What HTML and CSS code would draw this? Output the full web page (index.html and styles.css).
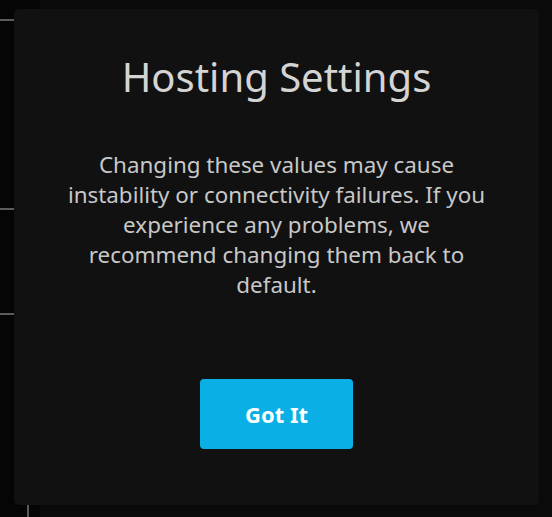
FILE: index.html
```html
<!DOCTYPE html>
<html>
<head>
<meta charset="utf-8">
<link rel="stylesheet" href="styles.css">
</head>
<body>
<div class="backdrop">
  <div class="side">
    <div class="sec sec-a"></div>
    <div class="sec sec-b"></div>
    <div class="sec sec-c"></div>
    <div class="sec-rest"><div class="vline"></div></div>
  </div>
</div>
<div class="dialog">
  <h1 class="title">Hosting Settings</h1>
  <p class="msg">Changing these values may cause instability or connectivity failures. If you experience any problems, we recommend changing them back to default.</p>
  <button class="btn">Got It</button>
</div>
</body>
</html>
```
FILE: styles.css
```css
html, body {
  margin: 0;
  padding: 0;
  width: 552px;
  height: 517px;
  overflow: hidden;
  background: #0a0a0a;
  font-family: "Noto Sans", "Open Sans", sans-serif;
}
.backdrop {
  display: flex;
  height: 517px;
}
.side {
  width: 40px;
  background: #050505;
  display: flex;
  flex-direction: column;
}
.sec {
  border-bottom: 2px solid #5c5c5c;
}
.sec-a { height: 19px; }
.sec-b { height: 187px; }
.sec-c { height: 103px; }
.sec-rest {
  flex: 1;
  display: flex;
  flex-direction: column;
  justify-content: flex-end;
  padding-left: 27px;
}
.vline {
  width: 2px;
  height: 14px;
  background: #5a5a5a;
}
.dialog {
  position: absolute;
  left: 14px;
  top: 9px;
  width: 525px;
  height: 496px;
  box-sizing: border-box;
  background: #111111;
  border-radius: 5px;
  padding-top: 41px;
  display: flex;
  flex-direction: column;
  align-items: center;
}
.title {
  margin: 0;
  font-size: 40px;
  font-weight: 400;
  line-height: 54px;
  color: #d4d4d4;
}
.msg {
  margin: 46px 0 0;
  width: 440px;
  text-align: center;
  font-size: 22.4px;
  line-height: 30px;
  color: #c8c8c8;
}
.btn {
  margin-top: 79px;
  width: 153px;
  height: 70px;
  border: none;
  border-radius: 4px;
  background: #0aafe6;
  color: #ffffff;
  font-family: "Noto Sans", "Open Sans", sans-serif;
  font-size: 22px;
  font-weight: 700;
  padding: 0;
}
```
